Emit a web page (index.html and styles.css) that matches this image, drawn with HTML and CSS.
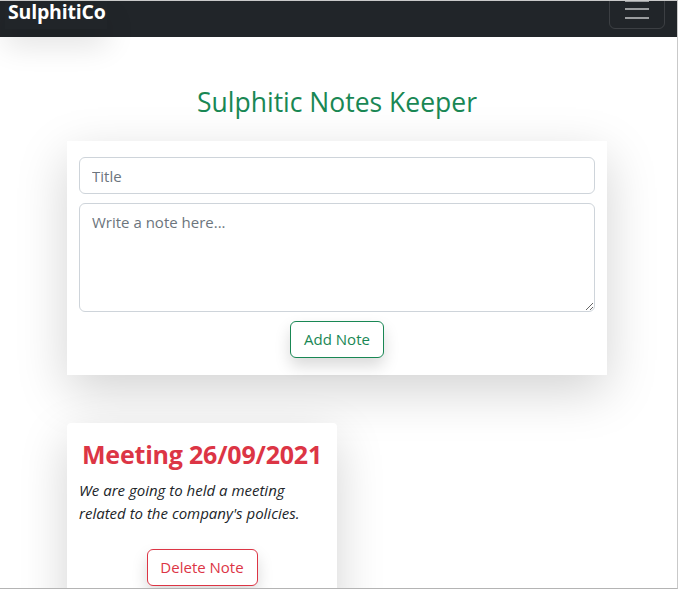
FILE: index.html
```html
<!DOCTYPE html>
<html lang="en">
<head>
<meta charset="utf-8">
<title>Sulphitic Notes Keeper</title>
<link rel="stylesheet" href="styles.css">
</head>
<body>
<div class="frame">
  <nav class="navbar">
    <a class="brand" href="#">SulphitiCo</a>
    <button class="toggler" type="button" aria-label="Toggle navigation">
      <span class="bar"></span><span class="bar"></span><span class="bar"></span>
    </button>
  </nav>
  <main class="container">
    <h2 class="page-title">Sulphitic Notes Keeper</h2>
    <form class="keeper">
      <input class="field" type="text" placeholder="Title">
      <textarea class="field area" placeholder="Write a note here..."></textarea>
      <div class="actions">
        <button type="button" class="btn btn-success">Add Note</button>
      </div>
    </form>
    <div class="notes">
      <article class="note">
        <h2 class="note-title">Meeting 26/09/2021</h2>
        <p class="note-body">We are going to held a meeting related to the company's policies.</p>
        <div class="actions">
          <button type="button" class="btn btn-danger">Delete Note</button>
        </div>
      </article>
    </div>
  </main>
</div>
</body>
</html>
```

FILE: styles.css
```css
* { box-sizing: border-box; }
html, body { margin: 0; padding: 0; background: #fff; }
body {
  font-family: "Open Sans", "Noto Sans", sans-serif;
  color: #212529;
  font-size: 16px;
}
.frame {
  width: 678px;
  height: 589px;
  border-top: 1px solid #c9c9c9;
  border-right: 1px solid #c9c9c9;
  border-bottom: 1px solid #b4b4b4;
  overflow: hidden;
}
.navbar {
  height: 36px;
  background: #212529;
  display: flex;
  justify-content: space-between;
  align-items: flex-end;
  padding: 0 12px 8px 5px;
}
.brand {
  align-self: flex-start;
  color: #fff;
  text-decoration: none;
  font-weight: 700;
  font-size: 19.5px;
  line-height: 21px;
  letter-spacing: -0.2px;
  padding: 0 4px 7px 3px;
  width: 102px;
  background: #212529;
  box-shadow: 0 16px 30px rgba(0, 0, 0, 0.12);
}
.toggler {
  width: 56px;
  height: 40px;
  flex-shrink: 0;
  background: transparent;
  border: 1px solid rgba(255, 255, 255, 0.12);
  border-radius: 6px;
  display: flex;
  flex-direction: column;
  align-items: center;
  justify-content: center;
  gap: 6.5px;
  padding: 0;
}
.bar {
  display: block;
  width: 24px;
  height: 2px;
  background: #9b9d9f;
}
.container {
  padding: 0 70px 0 67px;
}
.page-title {
  margin: 49px 0 22px;
  text-align: center;
  color: #198754;
  font-weight: 500;
  font-size: 26.5px;
  line-height: 33px;
}
.keeper {
  background: #fff;
  padding: 16px 12px 17px;
  box-shadow: 0 16px 48px rgba(0, 0, 0, 0.175);
  display: flex;
  flex-direction: column;
  gap: 9px;
}
.field {
  display: block;
  width: 100%;
  height: 37px;
  font-family: inherit;
  font-size: 15px;
  color: #212529;
  padding: 6px 12px;
  border: 1px solid #ced4da;
  border-radius: 6px;
  outline: none;
}
.field::placeholder { color: #6c757d; }
.area {
  height: 109px;
  resize: vertical;
  padding-top: 8px;
}
.actions {
  display: flex;
  justify-content: center;
}
.btn {
  font-family: inherit;
  font-size: 15px;
  line-height: 23px;
  padding: 6px 12px;
  background: #fff;
  border-radius: 6px;
  box-shadow: 0 8px 16px rgba(0, 0, 0, 0.15);
  cursor: pointer;
}
.btn-success {
  color: #198754;
  border: 1px solid #198754;
  width: 94px;
}
.btn-danger {
  color: #dc3545;
  border: 1px solid #dc3545;
  width: 111px;
}
.notes {
  margin-top: 48px;
  display: flex;
}
.note {
  width: 270px;
  height: 200px;
  background: #fff;
  border-radius: 4px;
  padding: 15px 12px 0;
  box-shadow: 0 16px 48px rgba(0, 0, 0, 0.175);
}
.note-title {
  margin: 0 0 8px;
  text-align: center;
  color: #dc3545;
  font-weight: 700;
  font-size: 25px;
  line-height: 33px;
  letter-spacing: -0.2px;
}
.note-body {
  margin: 0 0 24px;
  font-style: italic;
  font-size: 15px;
  line-height: 23px;
}
```
